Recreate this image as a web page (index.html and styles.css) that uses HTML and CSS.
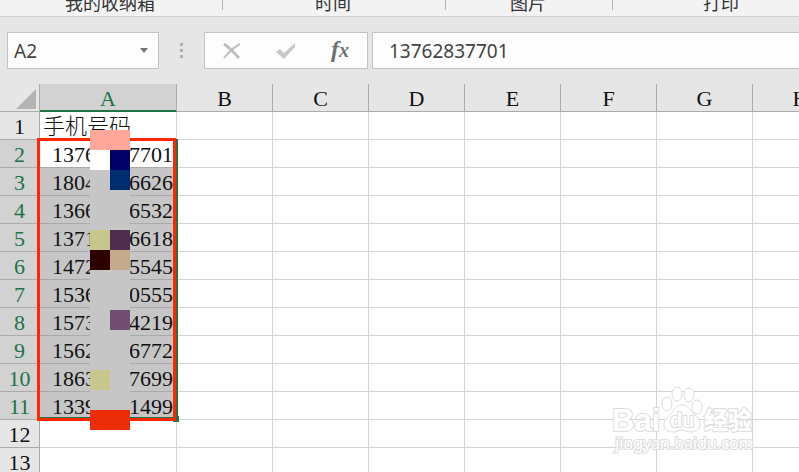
FILE: index.html
```
<!DOCTYPE html>
<html lang="zh-CN">
<head>
<meta charset="utf-8">
<title>A2</title>
<link rel="stylesheet" href="styles.css">
</head>
<body>
<div class="app">
  <header class="ribbon">
    <span class="group storage">我的收纳箱</span>
    <span class="group time">时间</span>
    <span class="group picture">图片</span>
    <span class="group print">打印</span>
  </header>
  <div class="formula-bar">
    <div class="name-box">
      <input class="name-input" type="text" value="A2" aria-label="名称框">
      <button class="name-toggle" type="button" aria-label="展开"><svg width="8" height="5" viewBox="0 0 8 5"><path d="M0 0h8L4 5z" fill="#777"/></svg></button>
    </div>
    <div class="grip"><i></i><i></i><i></i></div>
    <div class="actions">
      <button type="button" aria-label="取消"><svg width="20" height="18" viewBox="0 0 20 18"><path d="M2 2Q8 6 17 16" fill="none" stroke="#c0c0c0" stroke-width="3"/><path d="M18 2Q10 6 2 16" fill="none" stroke="#c0c0c0" stroke-width="2"/></svg></button>
      <button type="button" aria-label="输入"><svg width="20" height="18" viewBox="0 0 20 18"><path d="M0 10L4 7l4 4L19 1V5L8 17z" fill="#c8c8c8"/></svg></button>
      <button type="button" class="fx" aria-label="插入函数"><span class="f">f</span><span class="x">x</span></button>
    </div>
    <input class="formula" type="text" value="13762837701" aria-label="编辑栏">
  </div>
  <main class="sheet">
    <table class="grid">
      <colgroup><col class="c-row"><col class="c-a"><col><col><col><col><col><col><col></colgroup>
      <thead>
        <tr><th class="corner"><svg width="20" height="20" viewBox="0 0 20 20"><path d="M20 0v20H0z" fill="#b4b4b4"/></svg></th><th class="on">A</th><th>B</th><th>C</th><th>D</th><th>E</th><th>F</th><th>G</th><th>H</th></tr>
      </thead>
      <tbody>
        <tr><th>1</th><td class="title">手机号码</td><td></td><td></td><td></td><td></td><td></td><td></td><td></td></tr>
        <tr class="sel active"><th>2</th><td>13762837701</td><td></td><td></td><td></td><td></td><td></td><td></td><td></td></tr>
        <tr class="sel"><th>3</th><td>1804<b></b>6626</td><td></td><td></td><td></td><td></td><td></td><td></td><td></td></tr>
        <tr class="sel"><th>4</th><td>1366<b></b>6532</td><td></td><td></td><td></td><td></td><td></td><td></td><td></td></tr>
        <tr class="sel"><th>5</th><td>1371<b></b>6618</td><td></td><td></td><td></td><td></td><td></td><td></td><td></td></tr>
        <tr class="sel"><th>6</th><td>1472<b></b>5545</td><td></td><td></td><td></td><td></td><td></td><td></td><td></td></tr>
        <tr class="sel"><th>7</th><td>1536<b></b>0555</td><td></td><td></td><td></td><td></td><td></td><td></td><td></td></tr>
        <tr class="sel"><th>8</th><td>1573<b></b>4219</td><td></td><td></td><td></td><td></td><td></td><td></td><td></td></tr>
        <tr class="sel"><th>9</th><td>1562<b></b>6772</td><td></td><td></td><td></td><td></td><td></td><td></td><td></td></tr>
        <tr class="sel"><th>10</th><td>1863<b></b>7699</td><td></td><td></td><td></td><td></td><td></td><td></td><td></td></tr>
        <tr class="sel"><th>11</th><td>1339<b></b>1499</td><td></td><td></td><td></td><td></td><td></td><td></td><td></td></tr>
        <tr><th>12</th><td></td><td></td><td></td><td></td><td></td><td></td><td></td><td></td></tr>
        <tr><th>13</th><td></td><td></td><td></td><td></td><td></td><td></td><td></td><td></td></tr>
      </tbody>
    </table>
    <div class="selection"></div>
    <div class="handle"></div>
    <div class="frame"></div>
    <div class="mosaic">
      <i class="pink"></i><i class="pink"></i>
      <i class="white"></i><i class="navy"></i>
      <i></i><i class="blue"></i>
      <i></i><i></i>
      <i></i><i></i>
      <i class="olive"></i><i class="plum"></i>
      <i class="maroon"></i><i class="tan"></i>
      <i></i><i></i>
      <i></i><i></i>
      <i></i><i class="mauve"></i>
      <i></i><i></i>
      <i></i><i></i>
      <i class="olive"></i><i></i>
      <i></i><i></i>
      <i class="red"></i><i class="red"></i>
    </div>
    <svg class="watermark" width="150" height="76" viewBox="0 0 150 76">
      <ellipse cx="56" cy="20" rx="5" ry="7"/>
      <ellipse cx="66" cy="10" rx="5" ry="7"/>
      <ellipse cx="78" cy="11" rx="5" ry="7"/>
      <ellipse cx="86" cy="23" rx="5" ry="7"/>
      <path d="M71 21C65 21 63 26 60 30C56 34 53 36 53 41C53 46 57 48 62 48C66 48 68 46 71 46C74 46 76 48 80 48C86 48 89 45 89 41C89 36 86 33 83 30C79 26 77 21 71 21Z"/>
      <text class="brand" x="1" y="47">Bai</text>
      <text class="du" x="59" y="43">du</text>
      <text class="exp" x="93" y="45">经验</text>
      <text class="url" x="4" y="65">jingyan.baidu.com</text>
    </svg>
  </main>
</div>
</body>
</html>
```
FILE: styles.css
```
* { box-sizing: border-box; }
body { margin: 0; background: #fff; }
.app { height: 100vh; overflow: hidden; background: #e6e6e6; font-family: "Noto Sans", "Noto Sans CJK SC", sans-serif; }
.ribbon { display: flex; height: 17px; overflow: hidden; background: #f3f3f3; border-bottom: 1px solid #d0d0d0; }
.group { flex: none; height: 16px; margin-top: -6px; padding-right: 2px; border-right: 1px solid #b4b4b4; font-size: 18px; line-height: 18px; text-align: center; color: #333; }
.storage, .time { width: 223px; }
.picture { width: 167px; }
.print { width: 219px; }
.formula-bar { display: flex; height: 67px; padding: 15px 0 15px 7px; }
.name-box, .actions, .formula { height: 37px; background: #fdfdfd; border: 1px solid #c3c3c3; }
.name-box { display: flex; width: 152px; }
input, button { margin: 0; border: 0; padding: 0; background: none; font: inherit; color: #444; }
button svg { display: block; margin: 0 auto; }
.name-input { flex: 1; min-width: 0; padding-left: 6px; font-size: 19px; }
.name-toggle { width: 28px; }
.grip { display: grid; align-content: center; justify-content: center; gap: 3px; width: 45px; }
.grip i { width: 3px; height: 3px; background: #b0b0b0; }
.actions { display: flex; width: 164px; margin-right: 4px; }
.actions button { flex: 1; }
.fx { font-family: "Liberation Serif", serif; font-style: italic; font-weight: bold; line-height: 24px; }
.fx span { color: #707070; }
.fx .f { font-size: 24px; }
.fx .x { font-size: 20px; }
.formula { flex: 1; min-width: 0; padding-left: 16px; font-size: 19px; border-right: 0; }
.sheet { position: relative; }
.grid { width: 849px; table-layout: fixed; border-collapse: separate; border-spacing: 0; background: #fff; font: 22px/24px "Liberation Serif", "Noto Sans CJK SC", serif; color: #111; }
.grid col { width: 96px; }
.grid .c-row { width: 40px; }
.grid .c-a { width: 137px; }
.grid th, .grid td { height: 28px; padding: 3px 0 0; border-right: 1px solid #d4d4d4; border-bottom: 1px solid #d4d4d4; font-weight: normal; }
.grid th { background: #e6e6e6; border-color: #ababab; }
.grid td { padding-right: 3px; text-align: right; white-space: nowrap; }
.grid .title { padding-left: 3px; text-align: left; font-weight: 300; }
.grid .on, .sel th { background: #d2d2d2; color: #217346; }
.grid .on { border-bottom-color: #217346; box-shadow: inset 0 -1px #217346; }
.grid .corner svg { display: block; margin-left: 16px; }
.sel td:nth-child(2) { background: #c6c6c6; border-bottom-color: #aaa; }
.active td:nth-child(2) { background: #fff; }
.sel b { display: inline-block; width: 33px; }
.selection, .handle, .frame, .mosaic, .watermark { position: absolute; }
.selection { left: 38px; top: 55px; width: 140px; height: 280px; border: 2px solid #217346; }
.handle { left: 173px; top: 332px; width: 6px; height: 6px; background: #217346; }
.frame { left: 37px; top: 54px; width: 139px; height: 283px; border: 3px solid #ff2600; }
.mosaic { display: grid; grid-template-columns: 20px 20px; grid-auto-rows: 20px; left: 90px; top: 46px; }
.mosaic i { background: #c6c6c6; }
.mosaic .pink { background: #ffa899; }
.mosaic .white { background: #fff; }
.mosaic .navy { background: #000066; }
.mosaic .blue { background: #002d70; }
.mosaic .olive { background: #c6c68d; }
.mosaic .plum { background: #4f2d4f; }
.mosaic .maroon { background: #2d0000; }
.mosaic .tan { background: #c6aa8d; }
.mosaic .mauve { background: #724f72; }
.mosaic .red { background: #eb2d09; }
.watermark { left: 611px; top: 300px; fill: #fff; stroke: #dcdcdc; stroke-width: 1px; }
.watermark text { paint-order: stroke; stroke-width: 2px; stroke-linejoin: round; }
.brand { font: bold 31px "Liberation Sans", sans-serif; }
.du { font: bold 20px "Liberation Sans", sans-serif; }
.exp { font: 900 24px "Noto Sans CJK SC", sans-serif; }
.url { font: 16px "Noto Sans", sans-serif; }
```
